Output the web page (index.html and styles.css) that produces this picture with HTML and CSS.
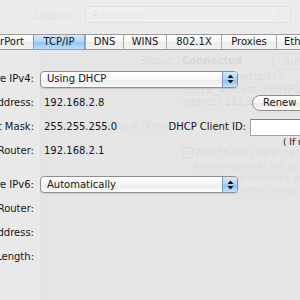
FILE: index.html
```html
<!DOCTYPE html>
<html lang="en">
<head>
    <meta charset="UTF-8">
    <meta name="viewport" content="width=device-width, initial-scale=1.0">
    <title>Network - TCP/IP</title>
    <link rel="stylesheet" href="styles.css">
</head>
<body>
    <div class="window">
        <!-- faded pane behind the sheet -->
        <div class="ghost">
            <div class="ghost-top"></div>
            <div class="ghost-side"></div>
            <span class="g g-location">Location:</span>
            <div class="g-popup"><span>Automatic</span><span class="g-arrows">&#8661;</span></div>
            <span class="g g-status">Status:</span>
            <span class="g g-connected">Connected</span>
            <div class="g-button">Turn</div>
            <span class="g g-l1">AirPort is connected to</span>
            <span class="g g-l2">active_wireless_0869F1 and has the IP</span>
            <span class="g g-l3">address 192.168.2.8.</span>
            <span class="g g-netname">Network Name:</span>
            <span class="g-check">&#10003;</span>
            <span class="g g-ask">Ask to join new networks</span>
            <span class="g g-k1">Known networks will be joined automatically.</span>
            <span class="g g-k2">If no known networks are available, you will</span>
            <span class="g g-k3">be asked before joining a new network.</span>
        </div>

        <div class="sheet">
            <div class="tabs">
                <div class="tab first">AirPort</div>
                <div class="tab selected">TCP/IP</div>
                <div class="tab">DNS</div>
                <div class="tab">WINS</div>
                <div class="tab">802.1X</div>
                <div class="tab">Proxies</div>
                <div class="tab last">Ethernet</div>
            </div>

            <div class="form">
                <div class="label">Configure IPv4:</div>
                <div class="popup">
                    <span class="popup-text">Using DHCP</span>
                    <span class="stepper">
                        <svg width="7" height="10" viewBox="0 0 7 10"><path d="M3.5 0.5 L6.5 4 L0.5 4 Z M0.5 6 L6.5 6 L3.5 9.5 Z" fill="#111"/></svg>
                    </span>
                </div>

                <div class="label">IPv4 Address:</div>
                <div class="value">192.168.2.8</div>
                <div class="button">Renew DHCP Lease</div>

                <div class="label">Subnet Mask:</div>
                <div class="value">255.255.255.0</div>
                <div class="rlabel">DHCP Client ID:</div>
                <div class="field"></div>

                <div class="label">Router:</div>
                <div class="value">192.168.2.1</div>
                <div class="note">( If required )</div>
            </div>

            <div class="form v6">
                <div class="label">Configure IPv6:</div>
                <div class="popup">
                    <span class="popup-text">Automatically</span>
                    <span class="stepper">
                        <svg width="7" height="10" viewBox="0 0 7 10"><path d="M3.5 0.5 L6.5 4 L0.5 4 Z M0.5 6 L6.5 6 L3.5 9.5 Z" fill="#111"/></svg>
                    </span>
                </div>

                <div class="label">Router:</div>
                <div class="value"></div>

                <div class="label">IPv6 Address:</div>
                <div class="value"></div>

                <div class="label">Prefix Length:</div>
                <div class="value"></div>
            </div>
        </div>
    </div>
</body>
</html>
```

FILE: styles.css
```css
body {
    margin: 0;
    background-color: #e5e5e5;
    font-family: "DejaVu Sans", Verdana, sans-serif;
    font-size: 10px;
    color: #151515;
}
.window {
    position: relative;
    width: 300px;
    height: 300px;
    overflow: hidden;
}

/* faded pane behind the sheet */
.ghost {
    position: absolute;
    inset: 0;
    color: rgba(0, 0, 0, 0.07);
}
.ghost-top {
    position: absolute;
    left: 0;
    top: 0;
    width: 300px;
    height: 34px;
    background: #ebebeb;
}
.ghost-side {
    position: absolute;
    left: 0;
    top: 50px;
    width: 40px;
    height: 250px;
    background: #e9e9e9;
    border-right: 1px solid #e2e2e2;
}
.g {
    position: absolute;
    white-space: nowrap;
    line-height: 12px;
}
.g-location { left: 34px; top: 10px; }
.g-popup {
    position: absolute;
    left: 85px;
    top: 6px;
    width: 206px;
    height: 17px;
    box-sizing: border-box;
    border: 1px solid #e0e0e0;
    border-radius: 4px;
    background: #eeeeee;
    padding-left: 6px;
    line-height: 15px;
}
.g-arrows {
    position: absolute;
    right: 8px;
    top: 0;
    font-size: 9px;
}
.g-status { left: 140px; top: 55px; }
.g-connected { left: 182px; top: 55px; font-weight: bold; }
.g-button {
    position: absolute;
    left: 272px;
    top: 53px;
    width: 60px;
    height: 15px;
    border: 1px solid #dcdcdc;
    border-radius: 8px;
    padding-left: 10px;
    line-height: 15px;
}
.g-l1 { left: 170px; top: 71px; }
.g-l2 { left: 182px; top: 84px; }
.g-l3 { left: 182px; top: 96px; }
.g-netname { left: 97px; top: 120px; }
.g-check {
    position: absolute;
    left: 182px;
    top: 147px;
    width: 9px;
    height: 9px;
    border: 1px solid #dadada;
    border-radius: 2px;
    font-size: 10px;
    line-height: 9px;
}
.g-ask { left: 195px; top: 146px; font-size: 11px; line-height: 14px; }
.g-k1 { left: 193px; top: 160px; font-size: 9px; }
.g-k2 { left: 193px; top: 172px; font-size: 9px; }
.g-k3 { left: 193px; top: 184px; font-size: 9px; }

/* the sheet */
.sheet {
    position: relative;
    padding-top: 34px;
}
.tabs {
    display: grid;
    grid-template-columns: 33px 52px 38px 43px 55px 55px 1fr;
    height: 16px;
    box-sizing: border-box;
    border-top: 1px solid #9a9a9a;
    border-bottom: 1px solid #9a9a9a;
    background: linear-gradient(#fefefe, #f5f5f5 50%, #ebebeb 51%, #f3f3f3);
}
.tab {
    border-left: 1px solid #aaaaaa;
    line-height: 14px;
    text-align: center;
    white-space: nowrap;
    overflow: hidden;
}
.tab.first {
    border-left: none;
    display: flex;
    justify-content: flex-end;
    padding-right: 9px;
}
.tab.last {
    text-align: left;
    padding-left: 7px;
}
.tab.selected {
    background: linear-gradient(#d3e9fc, #b0d6f8 50%, #8fc4f3 51%, #b9defb);
    border-left-color: #7d9cc4;
    border-right: 1px solid #7d9cc4;
}

.form {
    display: grid;
    grid-template-columns: 100px 134px 82px 1fr;
    grid-auto-rows: 24px;
    align-items: center;
    width: 420px;
    margin: 17px 0 0 -66px;
    line-height: 12px;
}
.form.v6 {
    margin-top: 9px;
    grid-template-rows: 25px;
}
.label {
    grid-column: 1;
    text-align: right;
    white-space: nowrap;
}
.value {
    grid-column: 2;
    padding-left: 10px;
    white-space: nowrap;
}
.popup {
    grid-column: 2 / 4;
    display: flex;
    align-items: center;
    width: 198px;
    height: 17px;
    box-sizing: border-box;
    margin-left: 6px;
    border: 1px solid #8e8e8e;
    border-radius: 4px;
    background: linear-gradient(#ffffff, #f6f6f6 50%, #ececec 51%, #fbfbfb);
    box-shadow: 0 1px 1px rgba(0, 0, 0, 0.12);
}
.popup-text {
    padding-left: 6px;
}
.stepper {
    margin-left: auto;
    width: 14px;
    height: 15px;
    display: flex;
    align-items: center;
    justify-content: center;
    border-left: 1px solid #7b9bc6;
    border-radius: 0 3px 3px 0;
    background: linear-gradient(#d6ebfd, #a9d2f7 50%, #86bff2 51%, #c4e4fc);
}
.button {
    grid-column: 4;
    justify-self: start;
    height: 16px;
    box-sizing: border-box;
    margin-left: 2px;
    padding: 0 10px;
    border: 1px solid #8c8c8c;
    border-radius: 8px;
    background: linear-gradient(#ffffff, #f5f5f5 50%, #e8e8e8 51%, #fafafa);
    line-height: 14px;
    white-space: nowrap;
}
.rlabel {
    grid-column: 3;
    text-align: right;
    padding-right: 4px;
    white-space: nowrap;
}
.field {
    grid-column: 4;
    height: 17px;
    box-sizing: border-box;
    border: 1px solid #a2a2a2;
    border-top-color: #7f7f7f;
    background: #ffffff;
}
.note {
    grid-column: 4;
    align-self: start;
    margin-top: -1px;
    padding-left: 33px;
    font-size: 9px;
    line-height: 9px;
    white-space: nowrap;
}
```
